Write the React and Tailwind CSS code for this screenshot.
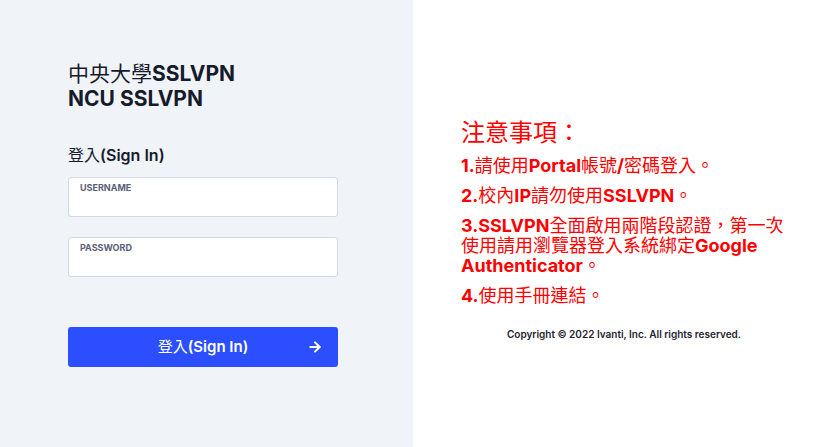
import { ArrowRight } from 'lucide-react'

const FONT = { fontFamily: 'Inter, "Noto Sans CJK TC", sans-serif' }

// Chinese glyphs show in a regular weight, latin runs in bold
const Zh = ({ children }) => <span className="font-normal">{children}</span>

const NOTES = [
  <>1.<Zh>請使用</Zh>Portal<Zh>帳號</Zh>/<Zh>密碼登入。</Zh></>,
  <>2.<Zh>校內</Zh>IP<Zh>請勿使用</Zh>SSLVPN<Zh>。</Zh></>,
  <>3.SSLVPN<Zh>全面啟用兩階段認證，第一次使用請用瀏覽器登入系統綁定</Zh>Google Authenticator<Zh>。</Zh></>,
  <>4.<Zh>使用手冊連結。</Zh></>,
]

function Field({ label, type }) {
  return (
    <div className="h-[40px] w-[270px] rounded-[3px] border border-[#d3d9e3] bg-white px-[11px] pt-[4px]">
      <div className="text-[9px] font-bold leading-[11px] text-[#5b6078]">{label}</div>
      <input type={type} className="w-full bg-transparent text-[13px] outline-none" />
    </div>
  )
}

export default function App() {
  return (
    <div className="flex h-[447px] w-[822px] overflow-hidden" style={FONT}>
      {/* Login side */}
      <div className="flex w-[413px] flex-col bg-[#f0f3f8] pl-[68px] pt-[61px]">
        <h1 className="text-[21px] font-bold leading-[25px] text-[#161b2b]">
          <Zh>中央大學</Zh>SSLVPN
          <br />
          NCU SSLVPN
        </h1>
        <div className="mt-[34px] text-[16px] font-semibold leading-[20px] text-[#161b2b]">
          <Zh>登入</Zh>(Sign In)
        </div>
        <div className="mt-[12px] flex flex-col gap-[20px]">
          <Field label="USERNAME" type="text" />
          <Field label="PASSWORD" type="password" />
        </div>
        <button className="relative mt-[50px] flex h-[40px] w-[270px] items-center justify-center rounded-[3px] bg-[#2b4fff] text-[15px] font-semibold text-white">
          <Zh>登入</Zh>(Sign In)
          <ArrowRight className="absolute right-[15px] top-[12px] h-[16px] w-[16px]" strokeWidth={3} />
        </button>
      </div>

      {/* Notice side */}
      <div className="flex flex-1 flex-col bg-white pl-[48px] pt-[118px]">
        <div className="w-[326px]">
          <h2 className="text-[24px] leading-[30px] text-[#ff0000]">注意事項：</h2>
          <div className="mt-[8px] flex flex-col gap-[10px]">
            {NOTES.map((n, i) => (
              <p key={i} className="text-[18px] font-bold leading-[20px] text-[#ff0000]">{n}</p>
            ))}
          </div>
          <p className="mt-[21px] text-center text-[10px] font-semibold text-[#1f2330]">
            Copyright © 2022 Ivanti, Inc. All rights reserved.
          </p>
        </div>
      </div>
    </div>
  )
}
